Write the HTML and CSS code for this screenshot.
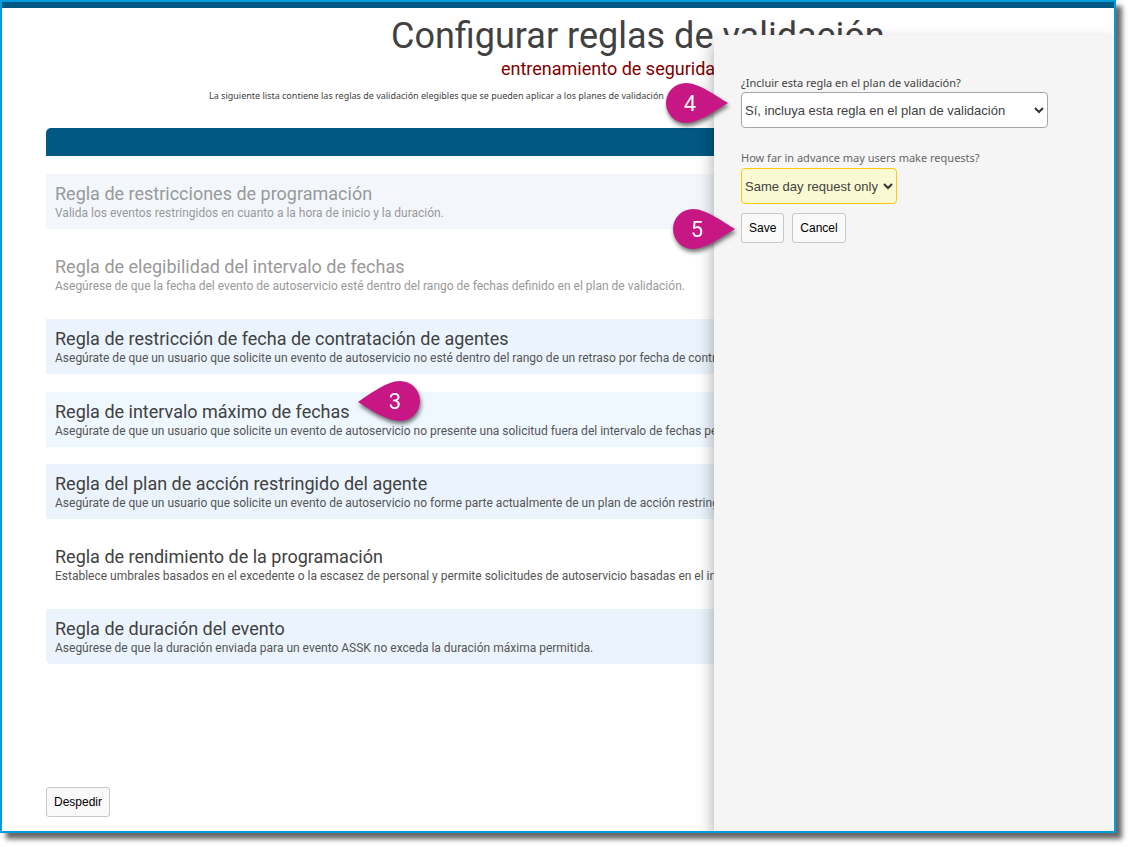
FILE: index.html
```html
<!DOCTYPE html>
<html lang="es">
<head>
    <meta charset="UTF-8">
    <meta name="viewport" content="width=device-width, initial-scale=1.0">
    <title>Configurar reglas de validación</title>
    <link rel="stylesheet" href="styles.css">
</head>
<body>

    <div class="frame">
        <main class="page">
            <header class="page-header">
                <h1>Configurar reglas de validación</h1>
                <p class="subtitle">entrenamiento de seguridad</p>
                <p class="intro">La siguiente lista contiene las reglas de validación elegibles que se pueden aplicar a los planes de validación</p>
            </header>

            <div class="list-bar"></div>

            <ul class="rules">
                <li class="rule tint disabled">
                    <h2>Regla de restricciones de programación</h2>
                    <p>Valida los eventos restringidos en cuanto a la hora de inicio y la duración.</p>
                </li>
                <li class="rule disabled">
                    <h2>Regla de elegibilidad del intervalo de fechas</h2>
                    <p>Asegúrese de que la fecha del evento de autoservicio esté dentro del rango de fechas definido en el plan de validación.</p>
                </li>
                <li class="rule tint">
                    <h2>Regla de restricción de fecha de contratación de agentes</h2>
                    <p>Asegúrate de que un usuario que solicite un evento de autoservicio no esté dentro del rango de un retraso por fecha de contratación.</p>
                </li>
                <li class="rule selected">
                    <h2>Regla de intervalo máximo de fechas
                        <svg class="marker marker-left" width="62" height="40" viewBox="0 0 62 40">
                            <path d="M0 21C12 13 29 0 42 0A20 20 0 1 1 42 40C29 40 12 29 0 21Z"/>
                            <text x="37" y="28">3</text>
                        </svg>
                    </h2>
                    <p>Asegúrate de que un usuario que solicite un evento de autoservicio no presente una solicitud fuera del intervalo de fechas permitido.</p>
                </li>
                <li class="rule tint">
                    <h2>Regla del plan de acción restringido del agente</h2>
                    <p>Asegúrate de que un usuario que solicite un evento de autoservicio no forme parte actualmente de un plan de acción restringido.</p>
                </li>
                <li class="rule">
                    <h2>Regla de rendimiento de la programación</h2>
                    <p>Establece umbrales basados en el excedente o la escasez de personal y permite solicitudes de autoservicio basadas en el intervalo.</p>
                </li>
                <li class="rule tint">
                    <h2>Regla de duración del evento</h2>
                    <p>Asegúrese de que la duración enviada para un evento ASSK no exceda la duración máxima permitida.</p>
                </li>
            </ul>

            <div class="page-footer">
                <button type="button" class="btn">Despedir</button>
            </div>
        </main>

        <form class="panel">
            <div class="field">
                <label for="include">¿Incluir esta regla en el plan de validación?</label>
                <div class="control">
                    <select id="include" class="select-wide">
                        <option>Sí, incluya esta regla en el plan de validación</option>
                    </select>
                    <svg class="chevron" width="10" height="7" viewBox="0 0 10 7"><path d="M1 1L5 5L9 1"/></svg>
                </div>
                <svg class="marker marker-field" width="62" height="40" viewBox="0 0 62 40">
                    <path d="M62 20C50 13 33 0 20 0A20 20 0 1 0 20 40C33 40 50 27 62 20Z"/>
                    <text x="24" y="28">4</text>
                </svg>
            </div>
            <div class="field">
                <label for="advance">How far in advance may users make requests?</label>
                <div class="control">
                    <select id="advance" class="select-changed">
                        <option>Same day request only</option>
                    </select>
                    <svg class="chevron" width="10" height="7" viewBox="0 0 10 7"><path d="M1 1L5 5L9 1"/></svg>
                </div>
            </div>
            <div class="actions">
                <button type="button" class="btn">Save</button>
                <button type="button" class="btn">Cancel</button>
                <svg class="marker marker-actions" width="62" height="40" viewBox="0 0 62 40">
                    <path d="M62 20C50 13 33 0 20 0A20 20 0 1 0 20 40C33 40 50 27 62 20Z"/>
                    <text x="24" y="28">5</text>
                </svg>
            </div>
        </form>
    </div>

</body>
</html>
```

FILE: styles.css
```css
* {
    margin: 0;
    padding: 0;
    box-sizing: border-box;
}

body {
    display: flex;
    min-height: 100vh;
    padding: 0 14px 14px 0;
    background-color: #fff;
    color: #414141;
    font-family: Roboto, sans-serif;
}

.frame {
    position: relative;
    display: flex;
    flex: 1;
    min-width: 0;
    border: 2px solid #009ddc;
    background-color: #fff;
    box-shadow: 6px 6px 5px rgba(0, 0, 0, 0.6);
}

.page {
    display: flex;
    flex-direction: column;
    flex: 1;
    min-width: 0;
    overflow: hidden;
    border-top: 6px solid #005883;
    padding: 6px 0 14px 44px;
}

.page-header {
    padding-bottom: 24px;
    white-space: nowrap;
}

h1 {
    padding-left: 345px;
    font-size: 36px;
    font-weight: 400;
    line-height: 44px;
}

.subtitle {
    padding-left: 455px;
    color: #800000;
    font-size: 18px;
    line-height: 22px;
}

.intro {
    padding-left: 163px;
    padding-top: 8px;
    font-family: "Noto Sans", sans-serif;
    font-size: 9px;
    line-height: 16px;
}

.list-bar {
    height: 28px;
    border-radius: 5px 0 0 0;
    background-color: #005883;
}

.rules {
    display: flex;
    flex-direction: column;
    justify-content: space-between;
    min-height: 490px;
    margin-top: 18px;
    list-style: none;
}

.rule {
    padding: 8px 9px;
    white-space: nowrap;
}

.rule:last-child {
    border-bottom-left-radius: 5px;
}

.rule h2 {
    position: relative;
    width: fit-content;
    font-size: 18px;
    font-weight: 400;
    line-height: 23px;
}

.rule p {
    color: #555;
    font-size: 12px;
    line-height: 16px;
}

.tint {
    background-color: #ebf4fc;
}

.selected {
    background-color: #eff7ff;
}

.disabled h2,
.disabled p {
    color: #999;
}

.disabled.tint {
    background-color: #f3f7fc;
}

.page-footer {
    margin-top: auto;
}

.btn {
    height: 30px;
    padding: 0 7px;
    border: 1px solid #c8c8c8;
    border-radius: 3px;
    background-color: #f9f9f9;
    color: #000;
    font-family: "Liberation Sans", Arial, sans-serif;
    font-size: 12px;
}

/* slide-out editor that covers the right side of the list */
.panel {
    position: absolute;
    top: 33px;
    right: 0;
    bottom: 0;
    width: 400px;
    padding: 39px 27px;
    background-color: #f5f5f5;
    box-shadow: 0 8px 16px rgba(0, 0, 0, 0.35);
    clip-path: inset(-33px 0 0 -100px);
}

.field {
    position: relative;
    margin-bottom: 21px;
}

.field label {
    display: block;
    padding-bottom: 1px;
    font-family: "Noto Sans", sans-serif;
    font-size: 11px;
    line-height: 17px;
}

.field + .field {
    margin-bottom: 9px;
}

.field + .field label {
    padding-bottom: 2px;
    color: #666;
}

.control {
    position: relative;
    width: fit-content;
}

select {
    display: block;
    height: 36px;
    padding: 0 18px 0 3px;
    appearance: none;
    border: 1px solid #a5a5aa;
    border-radius: 4px;
    background-color: #fff;
    color: #414141;
    font-family: "Liberation Sans", Arial, sans-serif;
    font-size: 13px;
}

.select-wide {
    width: 307px;
}

.select-changed {
    width: 156px;
    border-color: #ffc90e;
    background-color: #fafad2;
}

.chevron {
    position: absolute;
    top: 15px;
    right: 4px;
    fill: none;
    stroke: #333;
    stroke-width: 2;
    pointer-events: none;
}

.actions {
    position: relative;
    display: flex;
    gap: 8px;
}

.marker {
    position: absolute;
    overflow: visible;
    filter: drop-shadow(1px 3px 2px rgba(0, 0, 0, 0.55));
}

.marker path {
    fill: #c61784;
}

.marker text {
    fill: #fff;
    font-family: Roboto, sans-serif;
    font-size: 22px;
    text-anchor: middle;
}

.marker-left {
    top: -19px;
    left: calc(100% + 8px);
}

.marker-field {
    top: 9px;
    left: -75px;
}

.marker-actions {
    top: -4px;
    left: -68px;
}
```
